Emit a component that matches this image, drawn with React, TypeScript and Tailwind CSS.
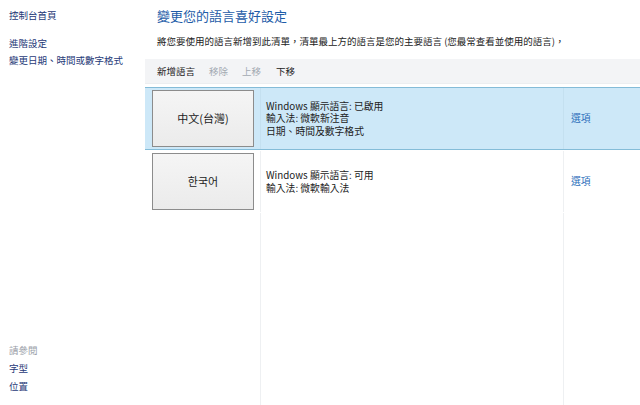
import React from 'react'

const font = { fontFamily: '"Noto Sans CJK TC", "Noto Sans", sans-serif' }

const languages = [
  {
    name: '中文(台灣)',
    lines: ['Windows 顯示語言: 已啟用', '輸入法: 微軟新注音', '日期、時間及數字格式'],
    selected: true,
  },
  {
    name: '한국어',
    lines: ['Windows 顯示語言: 可用', '輸入法: 微軟輸入法'],
    selected: false,
  },
]

function LanguageRow({ name, lines, selected }: { name: string; lines: string[]; selected: boolean }) {
  return (
    <div
      className={`grid grid-cols-[115px_303px_1fr] h-[63px] border-y ${
        selected ? 'bg-[#cde8f8] border-[#84bcd8]' : 'bg-white border-transparent'
      }`}
    >
      <div className="flex items-center pl-[7px]">
        <div
          className="w-[102px] h-[57px] flex items-center justify-center border border-[#8c8c8c] bg-gradient-to-b from-[#f5f5f5] to-[#ebebeb] text-[11px] text-[#222]"
          style={{ fontFamily: '"Noto Sans CJK TC", "Noto Sans CJK KR", sans-serif' }}
        >
          {name}
        </div>
      </div>
      <div
        className={`flex flex-col justify-center pl-[5px] border-l text-[9.8px] leading-[12.5px] text-[#222] ${
          selected ? 'border-[#c4e0f0]' : 'border-[#eef0f2]'
        }`}
      >
        {lines.map((l) => (
          <span key={l}>{l}</span>
        ))}
      </div>
      <div
        className={`flex items-center pl-[7px] border-l text-[9.8px] text-[#2d6fbb] ${
          selected ? 'border-[#c4e0f0]' : 'border-[#eef0f2]'
        }`}
      >
        選項
      </div>
    </div>
  )
}

export default function App() {
  return (
    <div className="w-[640px] h-[405px] flex bg-white overflow-hidden" style={font}>
      {/* sidebar */}
      <div className="w-[145px] flex flex-col justify-between pl-[9px] pt-[7px] pb-[10px] text-[9.5px] text-[#1f3a78]">
        <div className="flex flex-col">
          <span className="leading-[16px]">控制台首頁</span>
          <span className="leading-[17px] mt-[12px]">進階設定</span>
          <span className="leading-[17px]">變更日期、時間或數字格式</span>
        </div>
        <div className="flex flex-col">
          <span className="leading-[18px] text-[#9aa0a8]">請參閱</span>
          <span className="leading-[18px]">字型</span>
          <span className="leading-[18px]">位置</span>
        </div>
      </div>

      {/* main */}
      <div className="flex-1 flex flex-col">
        <div className="pl-[12px] pt-[7px] text-[13px] leading-[18px] text-[#1e5ca8]">變更您的語言喜好設定</div>
        <div className="pl-[12px] mt-[9px] text-[9.5px] leading-[14px] text-[#222]">
          將您要使用的語言新增到此清單，清單最上方的語言是您的主要語言 (您最常查看並使用的語言)，
        </div>
        <div className="mt-[11px] h-[25px] bg-[#f3f4f6] flex items-center pl-[12px] text-[9.5px] border-b border-[#eceef0]">
          <span className="text-[#222]">新增語言</span>
          <span className="ml-[14px] text-[#a3aab2]">移除</span>
          <span className="ml-[14px] text-[#a3aab2]">上移</span>
          <span className="ml-[15px] text-[#222]">下移</span>
        </div>
        <div className="mt-[3px] flex-1 flex flex-col">
          {languages.map((lang) => (
            <LanguageRow key={lang.name} {...lang} />
          ))}
          <div className="flex-1 grid grid-cols-[115px_303px_1fr]">
            <div />
            <div className="border-l border-[#eef0f2]" />
            <div className="border-l border-[#eef0f2]" />
          </div>
        </div>
      </div>
    </div>
  )
}
